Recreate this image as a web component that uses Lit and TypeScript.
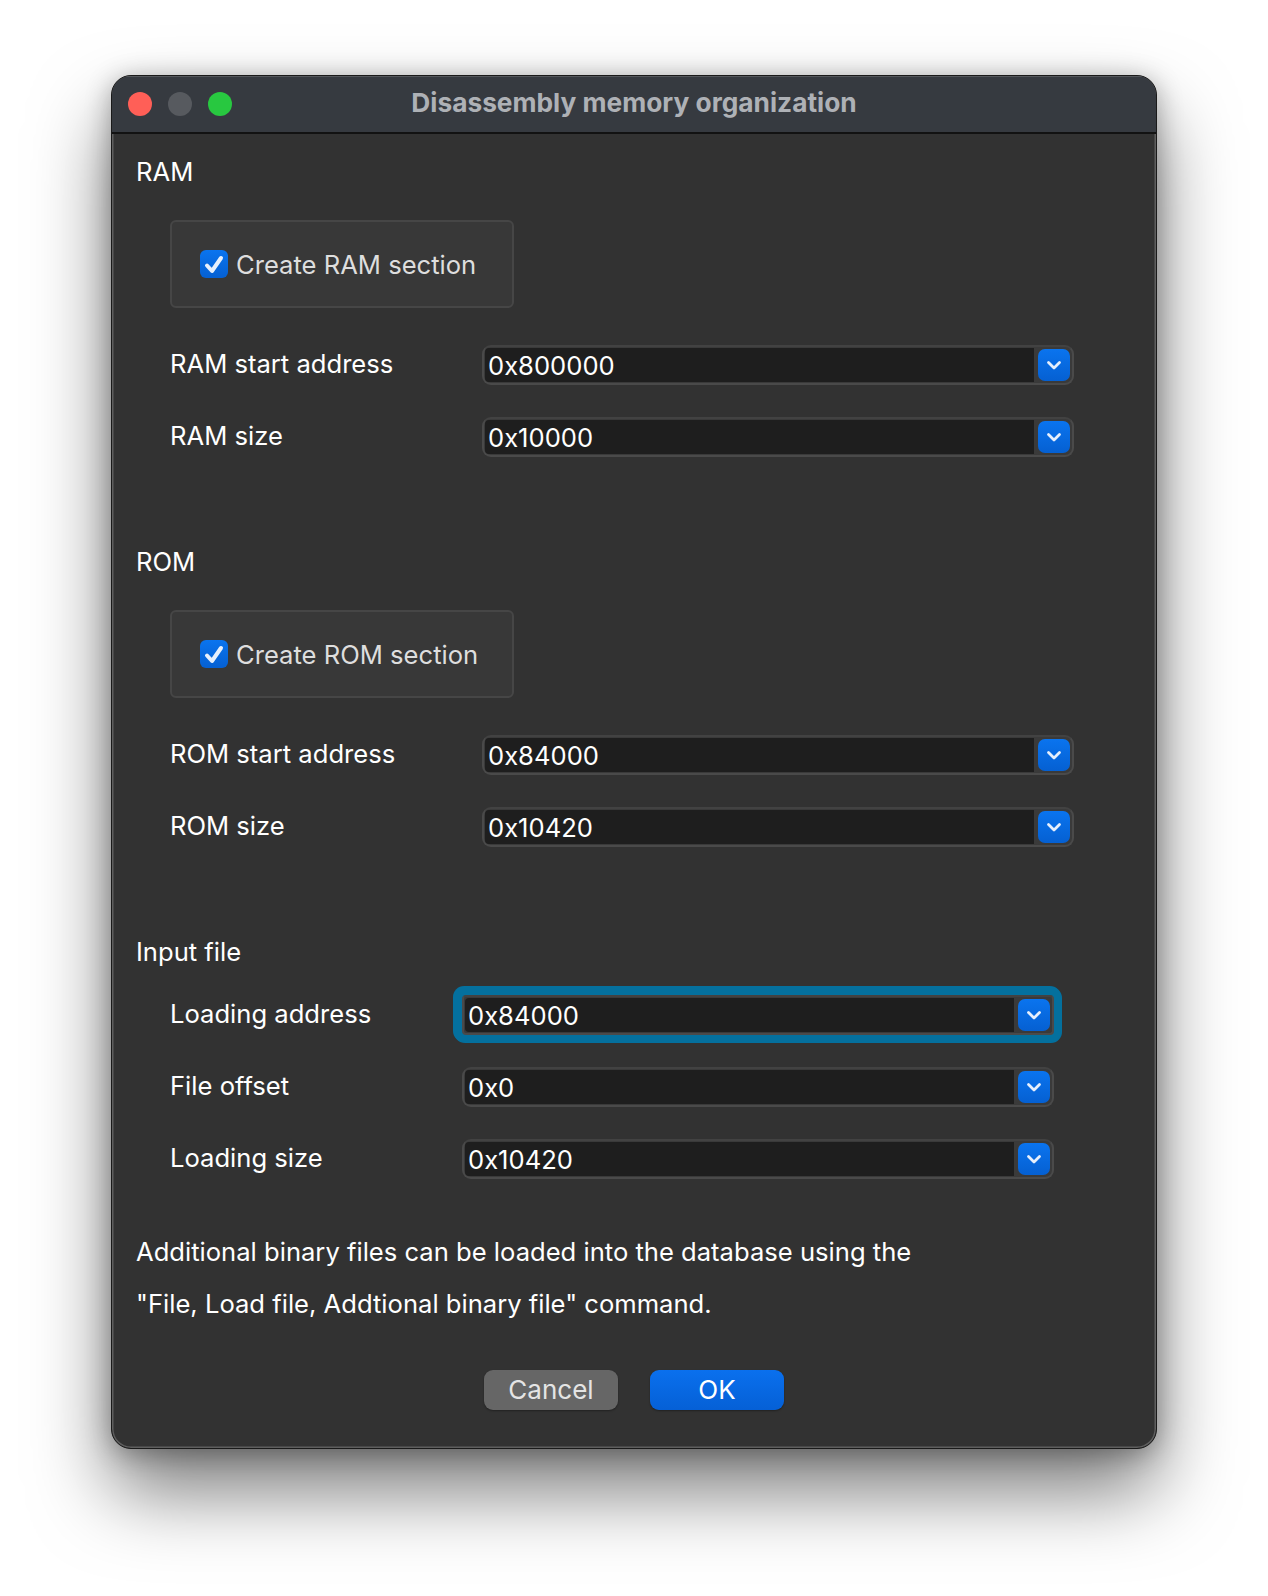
import { LitElement, html, css, svg } from 'lit'
import { customElement } from 'lit/decorators.js'

const chevron = svg`<path d="M4.5 7.5 10 13l5.5-5.5" fill="none" stroke="#e6effc" stroke-width="2.8" stroke-linecap="round" stroke-linejoin="round"/>`
const tick = svg`<path d="M7 15.5 12 21 21 8" fill="none" stroke="#e6f0fd" stroke-width="4" stroke-linecap="round" stroke-linejoin="round"/>`

@customElement('app-root')
export class AppRoot extends LitElement {
  static styles = css`
    :host {
      display: block;
      height: 1596px;
      background: #fff;
      font-family: Inter, "Liberation Sans", sans-serif;
      overflow: hidden;
    }
    .page { display: flex; justify-content: center; padding-top: 75px; }
    .window {
      box-sizing: border-box;
      width: 1046px;
      height: 1374px;
      background: #323232;
      border: 1px solid #1a1a1a;
      border-radius: 20px;
      box-shadow: inset 0 0 0 1.5px #5e5e5e, 0 42px 78px rgba(0, 0, 0, .52), 0 4px 26px rgba(0, 0, 0, .3);
      overflow: hidden;
    }
    .titlebar {
      display: grid;
      grid-template-columns: 1fr auto 1fr;
      align-items: center;
      box-sizing: border-box;
      height: 58px;
      padding: 0 16px;
      background: #363a40;
      border-top: 1px solid #55585c;
      border-bottom: 2px solid #121212;
    }
    .lights { display: flex; gap: 16px; margin-bottom: 2px; }
    .light { width: 24px; height: 24px; border-radius: 50%; }
    .red { background: #ff5f57; }
    .grey { background: #575a5f; }
    .green { background: #28c840; }
    .title { margin-bottom: 4px; font-size: 26.3px; font-weight: 700; color: #aeb1b6; }
    .body { display: flex; flex-direction: column; padding: 23px 0 0 24px; color: #fff; }
    .heading { font-size: 25.6px; line-height: 30px; color: #fff; }
    .heading.file { margin-bottom: 28px; }
    .group {
      display: flex;
      align-items: center;
      gap: 8px;
      box-sizing: border-box;
      width: 344px;
      height: 88px;
      margin: 33px 0 37px 34px;
      padding-left: 28px;
      background: #383838;
      border: 2px solid #464646;
      border-radius: 6px;
      font-size: 25.6px;
      color: #dedede;
    }
    .check {
      display: block;
      width: 28px;
      height: 28px;
      border-radius: 6px;
      background: linear-gradient(#0a74ef, #0560d2);
    }
    .rows { display: flex; flex-direction: column; gap: 32px; margin-left: 34px; }
    .row { display: flex; align-items: center; height: 40px; }
    .label { width: 312px; padding-bottom: 3px; font-size: 25.6px; color: #fff; }
    .input .label { width: 292px; }
    .combo {
      display: flex;
      align-items: center;
      box-sizing: border-box;
      width: 592px;
      height: 40px;
      padding: 1px 2px 1px 1px;
      background: #3a3a3a;
      border: 2px solid #4a4a4a;
      border-top-color: #424242;
      border-radius: 9px;
    }
    .focus { border-radius: 4px; box-shadow: -1px -1px 0 8px #04709e, 0 0 0 8px #04709e; }
    .value {
      flex: 1;
      align-self: stretch;
      display: flex;
      align-items: center;
      padding-left: 3px;
      background: #1e1e1e;
      border-radius: 4px 0 0 4px;
      font-size: 25.6px;
      color: #fff;
    }
    .drop {
      display: flex;
      align-items: center;
      justify-content: center;
      width: 32px;
      height: 32px;
      margin-left: 4px;
      border-radius: 7px;
      background: linear-gradient(#0a74ef, #0560d2);
    }
    .drop svg { display: block; width: 20px; height: 20px; }
    .spacer { height: 90px; }
    .note { margin-top: 47px; font-size: 25.6px; line-height: 52px; color: #fff; }
    .buttons { display: flex; justify-content: center; gap: 32px; margin: 40px 0 0 -24px; }
    .btn {
      display: flex;
      align-items: center;
      justify-content: center;
      box-sizing: border-box;
      width: 134px;
      height: 40px;
      padding-bottom: 2px;
      border-radius: 9px;
      font-size: 26px;
      box-shadow: 0 1px 2px rgba(0, 0, 0, .35);
    }
    .cancel { background: #666; color: #e4e4e4; }
    .ok { background: linear-gradient(#0a70ee, #0560d6); color: #fff; }
  `

  private combo(label: string, value: string, focus = false) {
    return html`
      <div class="row">
        <div class="label">${label}</div>
        <div class="combo ${focus ? 'focus' : ''}">
          <div class="value">${value}</div>
          <div class="drop"><svg viewBox="0 0 20 20">${chevron}</svg></div>
        </div>
      </div>
    `
  }

  private section(name: string, start: string, size: string) {
    return html`
      <div class="heading">${name}</div>
      <div class="group">
        <svg class="check" viewBox="0 0 28 28">${tick}</svg>
        <span>Create ${name} section</span>
      </div>
      <div class="rows">
        ${this.combo(`${name} start address`, start)}
        ${this.combo(`${name} size`, size)}
      </div>
      <div class="spacer"></div>
    `
  }

  render() {
    return html`
      <div class="page">
        <div class="window">
          <div class="titlebar">
            <div class="lights">
              <div class="light red"></div>
              <div class="light grey"></div>
              <div class="light green"></div>
            </div>
            <div class="title">Disassembly memory organization</div>
            <div></div>
          </div>
          <div class="body">
            ${this.section('RAM', '0x800000', '0x10000')}
            ${this.section('ROM', '0x84000', '0x10420')}
            <div class="heading file">Input file</div>
            <div class="rows input">
              ${this.combo('Loading address', '0x84000', true)}
              ${this.combo('File offset', '0x0')}
              ${this.combo('Loading size', '0x10420')}
            </div>
            <div class="note">
              Additional binary files can be loaded into the database using the<br />
              "File, Load file, Addtional binary file" command.
            </div>
            <div class="buttons">
              <div class="btn cancel">Cancel</div>
              <div class="btn ok">OK</div>
            </div>
          </div>
        </div>
      </div>
    `
  }
}
